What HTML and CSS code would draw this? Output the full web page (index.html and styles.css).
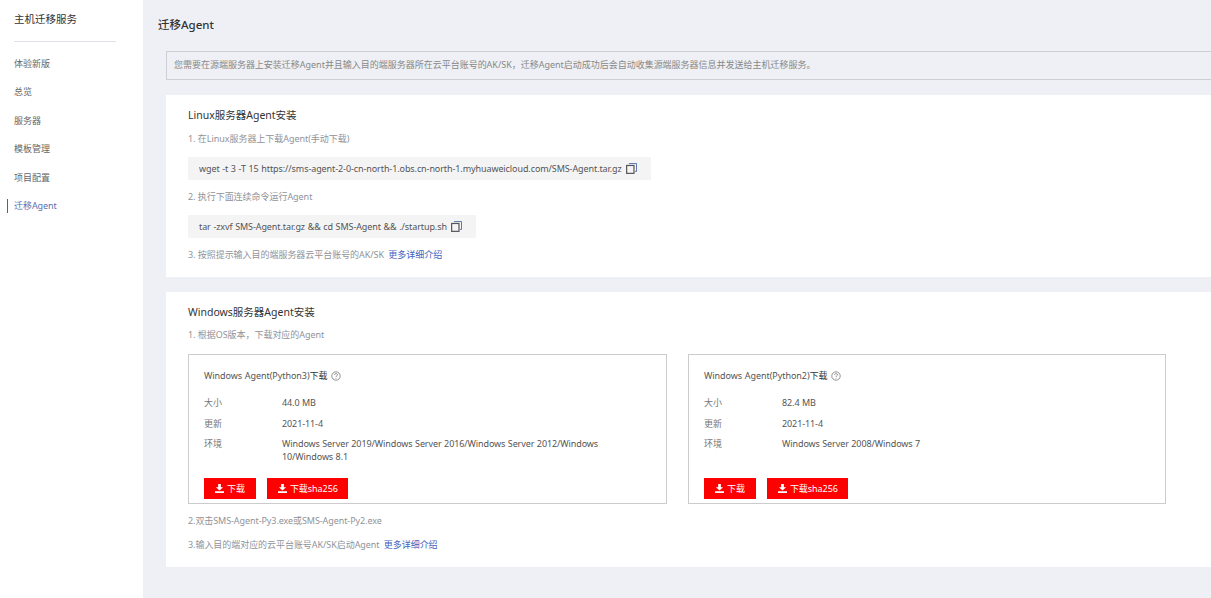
FILE: index.html
```html
<!DOCTYPE html>
<html lang="zh">
<head>
<meta charset="utf-8">
<title>迁移Agent</title>
<link rel="stylesheet" href="styles.css">
</head>
<body>
<div class="app">
  <aside class="side">
    <div class="side-title">主机迁移服务</div>
    <nav class="nav">
      <a class="nav-item">体验新版</a>
      <a class="nav-item">总览</a>
      <a class="nav-item">服务器</a>
      <a class="nav-item">模板管理</a>
      <a class="nav-item">项目配置</a>
      <a class="nav-item active">迁移Agent</a>
    </nav>
  </aside>
  <main class="main">
    <h1 class="page-title">迁移Agent</h1>
    <div class="notice">您需要在源端服务器上安装迁移Agent并且输入目的端服务器所在云平台账号的AK/SK，迁移Agent启动成功后会自动收集源端服务器信息并发送给主机迁移服务。</div>
    <section class="card linux">
      <h2 class="card-title">Linux服务器Agent安装</h2>
      <p class="step first">1. 在Linux服务器上下载Agent(手动下载)</p>
      <div class="cmd"><span>wget -t 3 -T 15 https://sms-agent-2-0-cn-north-1.obs.cn-north-1.myhuaweicloud.com/SMS-Agent.tar.gz</span>
        <svg class="copy" viewBox="0 0 12 12"><path d="M3.5 1.2V.6h8v8.6h-1.6" fill="none" stroke="#4a6aa8" stroke-width="1"/><rect x=".7" y="2.7" width="8" height="8.6" fill="none" stroke="#555" stroke-width="1.3"/></svg></div>
      <p class="step">2. 执行下面连续命令运行Agent</p>
      <div class="cmd"><span>tar -zxvf SMS-Agent.tar.gz &amp;&amp; cd SMS-Agent &amp;&amp; ./startup.sh</span>
        <svg class="copy" viewBox="0 0 12 12"><path d="M3.5 1.2V.6h8v8.6h-1.6" fill="none" stroke="#4a6aa8" stroke-width="1"/><rect x=".7" y="2.7" width="8" height="8.6" fill="none" stroke="#555" stroke-width="1.3"/></svg></div>
      <p class="step">3. 按照提示输入目的端服务器云平台账号的AK/SK <a class="link">更多详细介绍</a></p>
    </section>
    <section class="card windows">
      <h2 class="card-title">Windows服务器Agent安装</h2>
      <p class="step os">1. 根据OS版本，下载对应的Agent</p>
      <div class="pkgs">
        <div class="pkg">
          <div class="pkg-title"><span>Windows Agent(Python3)</span><b>下载</b>
            <svg class="help" viewBox="0 0 10 10"><circle cx="5" cy="5" r="4.2" fill="none" stroke="#666" stroke-width=".7"/><path d="M3.6 4c0-2 2.9-1.8 2.9-.2 0 1-1.5 1-1.5 2.2" fill="none" stroke="#666" stroke-width=".7"/><circle cx="5" cy="7.3" r=".45" fill="#666"/></svg></div>
          <dl class="info">
            <dt>大小</dt><dd>44.0 MB</dd>
            <dt>更新</dt><dd>2021-11-4</dd>
            <dt>环境</dt><dd>Windows Server 2019/Windows Server 2016/Windows Server 2012/Windows 10/Windows 8.1</dd>
          </dl>
          <div class="btns">
            <a class="btn"><svg class="dl" viewBox="0 0 10 10"><path d="M3.5 0h3v3.5H9L5 7.2 1 3.5h2.5zM0 8h10v2H0z" fill="#fff"/></svg>下载</a>
            <a class="btn wide"><svg class="dl" viewBox="0 0 10 10"><path d="M3.5 0h3v3.5H9L5 7.2 1 3.5h2.5zM0 8h10v2H0z" fill="#fff"/></svg>下载sha256</a>
          </div>
        </div>
        <div class="pkg">
          <div class="pkg-title"><span>Windows Agent(Python2)</span><b>下载</b>
            <svg class="help" viewBox="0 0 10 10"><circle cx="5" cy="5" r="4.2" fill="none" stroke="#666" stroke-width=".7"/><path d="M3.6 4c0-2 2.9-1.8 2.9-.2 0 1-1.5 1-1.5 2.2" fill="none" stroke="#666" stroke-width=".7"/><circle cx="5" cy="7.3" r=".45" fill="#666"/></svg></div>
          <dl class="info">
            <dt>大小</dt><dd>82.4 MB</dd>
            <dt>更新</dt><dd>2021-11-4</dd>
            <dt>环境</dt><dd>Windows Server 2008/Windows 7</dd>
          </dl>
          <div class="btns">
            <a class="btn"><svg class="dl" viewBox="0 0 10 10"><path d="M3.5 0h3v3.5H9L5 7.2 1 3.5h2.5zM0 8h10v2H0z" fill="#fff"/></svg>下载</a>
            <a class="btn wide"><svg class="dl" viewBox="0 0 10 10"><path d="M3.5 0h3v3.5H9L5 7.2 1 3.5h2.5zM0 8h10v2H0z" fill="#fff"/></svg>下载sha256</a>
          </div>
        </div>
      </div>
      <p class="step s2">2.双击SMS-Agent-Py3.exe或SMS-Agent-Py2.exe</p>
      <p class="step s3">3.输入目的端对应的云平台账号AK/SK启动Agent <a class="link">更多详细介绍</a></p>
    </section>
  </main>
</div>
</body>
</html>
```
FILE: styles.css
```css
* { box-sizing: border-box; }
html, body { margin: 0; height: 100%; overflow: hidden; }
body { font-family: "Noto Sans", "Noto Sans CJK SC", sans-serif; font-size: 9px; color: #555; background: #eef0f5; }
.app { display: flex; width: 1211px; height: 598px; overflow: hidden; }
.side { flex: 0 0 143px; background: #fff; padding: 10px 27px 0 14px; }
.side-title { font-size: 10.5px; line-height: 18px; color: #333; padding-bottom: 13px; border-bottom: 1px solid #dfe1e6; }
.nav { display: flex; flex-direction: column; margin-top: 7.5px; }
.nav-item { display: block; height: 28.6px; line-height: 28.6px; font-size: 9px; color: #666; position: relative; }
.nav-item.active { color: #5a6fb0; letter-spacing: -.05px; }
.nav-item.active::before { content: ""; position: absolute; left: -7px; top: 7px; height: 14px; border-left: 1px solid #4a5fa8; }
.main { flex: 1 0 0; min-width: 0; padding: 0 0 0 15px; }
.page-title { margin: 0; height: 51px; padding-top: 16px; font-size: 11.5px; line-height: 18px; font-weight: 500; color: #333; }
.notice { margin: 0 -60px 15px 8px; height: 29px; line-height: 26px; padding-left: 7px; border: 1px solid #cdcfd4; font-size: 9px; letter-spacing: -.015px; color: #888; white-space: nowrap; }
.card { background: #fff; margin: 0 -60px 15px 8px; padding: 0 22px; }
.linux { height: 182px; }
.windows { height: 275px; }
.card-title { margin: 0; padding-top: 12px; font-size: 10.5px; line-height: 16px; font-weight: 400; color: #333; }
.step { margin: 0; font-size: 9px; line-height: 14px; color: #909399; letter-spacing: -.04px; }
.step.first { margin-top: 9px; }
.step.os { margin-top: 8px; }
.cmd { display: flex; width: fit-content; align-items: center; height: 23px; margin: 11px 0 10px; padding: 0 14px 0 11px; background: #f4f4f5; color: #555; font-size: 9px; letter-spacing: -.09px; word-spacing: .4px; white-space: nowrap; }
.copy { width: 11px; height: 11px; margin-left: 4px; }
.link { color: #3f5fc0; margin-left: 2px; }
.pkgs { display: flex; gap: 21px; margin-top: 12px; }
.pkg { display: flex; flex-direction: column; width: 479px; height: 150px; border: 1px solid #ccc; padding: 13px 15px 4px; }
.pkg + .pkg { width: 478px; }
.pkg-title { font-size: 9px; line-height: 16px; color: #555; display: flex; align-items: center; letter-spacing: -.06px; word-spacing: .5px; }
.pkg-title b { font-weight: 400; color: #333; }
.help { width: 10px; height: 10px; margin-left: 4px; }
.info { display: grid; grid-template-columns: 78px 330px; margin: 12px 0 0; line-height: 13px; color: #555; }
.info dt { color: #777; margin-bottom: 7.5px; }
.info dd { margin: 0 0 7.5px; letter-spacing: -.1px; word-spacing: .3px; }
.btns { display: flex; gap: 11px; margin-top: auto; }
.btn { display: flex; align-items: center; height: 21px; padding: 0 11px; background: #f00; color: #fff; font-size: 9px; letter-spacing: -.05px; }
.btn.wide { padding-right: 10px; }
.dl { width: 9px; height: 9px; margin-right: 3px; }
.s2 { margin-top: 10px; letter-spacing: -.08px; }
.s3 { margin-top: 10px; letter-spacing: -.05px; }
```
